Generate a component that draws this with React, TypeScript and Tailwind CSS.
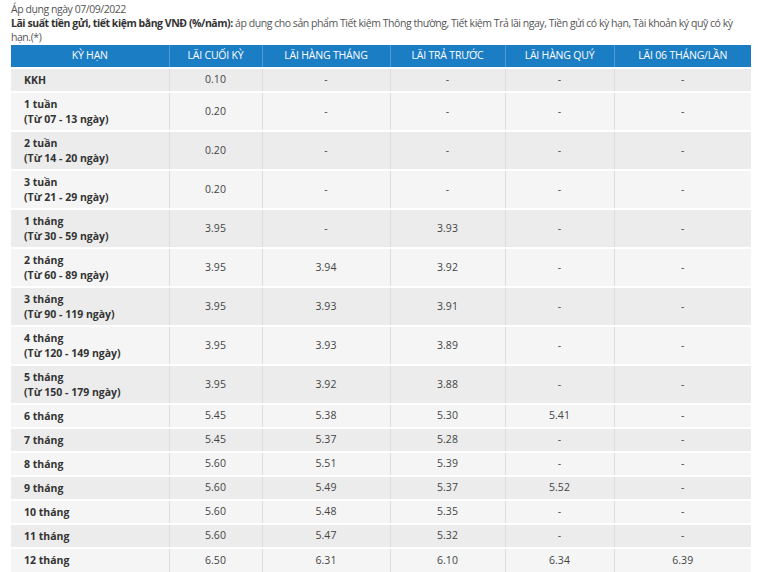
import React from "react";

type Row = { term: string; sub?: string; v: string[] };

const ROWS: Row[] = [
  { term: "KKH", v: ["0.10", "-", "-", "-", "-"] },
  { term: "1 tuần", sub: "(Từ 07 - 13 ngày)", v: ["0.20", "-", "-", "-", "-"] },
  { term: "2 tuần", sub: "(Từ 14 - 20 ngày)", v: ["0.20", "-", "-", "-", "-"] },
  { term: "3 tuần", sub: "(Từ 21 - 29 ngày)", v: ["0.20", "-", "-", "-", "-"] },
  { term: "1 tháng", sub: "(Từ 30 - 59 ngày)", v: ["3.95", "-", "3.93", "-", "-"] },
  { term: "2 tháng", sub: "(Từ 60 - 89 ngày)", v: ["3.95", "3.94", "3.92", "-", "-"] },
  { term: "3 tháng", sub: "(Từ 90 - 119 ngày)", v: ["3.95", "3.93", "3.91", "-", "-"] },
  { term: "4 tháng", sub: "(Từ 120 - 149 ngày)", v: ["3.95", "3.93", "3.89", "-", "-"] },
  { term: "5 tháng", sub: "(Từ 150 - 179 ngày)", v: ["3.95", "3.92", "3.88", "-", "-"] },
  { term: "6 tháng", v: ["5.45", "5.38", "5.30", "5.41", "-"] },
  { term: "7 tháng", v: ["5.45", "5.37", "5.28", "-", "-"] },
  { term: "8 tháng", v: ["5.60", "5.51", "5.39", "-", "-"] },
  { term: "9 tháng", v: ["5.60", "5.49", "5.37", "5.52", "-"] },
  { term: "10 tháng", v: ["5.60", "5.48", "5.35", "-", "-"] },
  { term: "11 tháng", v: ["5.60", "5.47", "5.32", "-", "-"] },
  { term: "12 tháng", v: ["6.50", "6.31", "6.10", "6.34", "6.39"] },
];

const HEADERS = ["Kỳ hạn", "Lãi cuối kỳ", "Lãi hàng tháng", "Lãi trả trước", "Lãi hàng quý", "Lãi 06 tháng/lần"];
const WIDTHS = ["w-[158px]", "w-[93px]", "w-[128px]", "w-[115px]", "w-[109px]", "w-[137px]"];

export default function App() {
  return (
    <div className="w-[758px] h-[572px] overflow-hidden bg-white font-['Open_Sans',sans-serif] text-[#555]">
      <div className="pl-[11px] pt-[2px] text-[10.5px] leading-[14px] tracking-[-0.45px] whitespace-nowrap">
        <div>Áp dụng ngày 07/09/2022</div>
        <div>
          <span className="font-bold text-[#333]">Lãi suất tiền gửi, tiết kiệm bằng VNĐ (%/năm):</span> áp dụng cho sản
          phẩm Tiết kiệm Thông thường, Tiết kiệm Trả lãi ngay, Tiền gửi có kỳ hạn, Tài khoản ký quỹ có kỳ
          <br />
          hạn.(*)
        </div>
      </div>
      <table className="ml-[11px] mt-[1px] w-[740px] table-fixed border-collapse text-[10.5px]">
        <thead>
          <tr className="bg-[#1b7dc4] text-white h-[23px]">
            {HEADERS.map((h, i) => (
              <th
                key={h}
                className={`${WIDTHS[i]} uppercase font-normal text-center border-l border-[#4e9bd4] first:border-l-0 tracking-[-0.2px]`}
              >
                {h}
              </th>
            ))}
          </tr>
        </thead>
        <tbody className="text-[#333]">
          {ROWS.map((r, i) => (
            <tr
              key={r.term}
              className={`${i % 2 === 0 ? "bg-[#ececec]" : "bg-[#f5f5f5]"} ${r.sub ? "h-[39px]" : "h-[24px]"} border-t-2 border-white`}
            >
              <td className="pl-[13px] font-bold leading-[15px] text-[#333]">
                <div>{r.term}</div>
                {r.sub && <div>{r.sub}</div>}
              </td>
              {r.v.map((v, j) => (
                <td key={j} className="text-center border-l border-[#dcdcdc] text-[#444]">
                  {v}
                </td>
              ))}
            </tr>
          ))}
        </tbody>
      </table>
    </div>
  );
}
